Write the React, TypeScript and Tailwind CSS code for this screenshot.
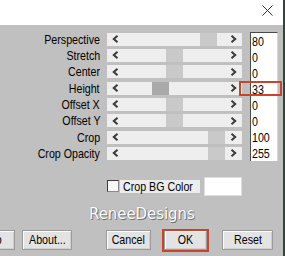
import React from "react";

const rows = [
  { label: "Perspective", value: "80", thumb: 93 },
  { label: "Stretch", value: "0", thumb: 59 },
  { label: "Center", value: "0", thumb: 59 },
  { label: "Height", value: "33", thumb: 45, dark: true },
  { label: "Offset X", value: "0", thumb: 59 },
  { label: "Offset Y", value: "0", thumb: 59 },
  { label: "Crop", value: "100", thumb: 101 },
  { label: "Crop Opacity", value: "255", thumb: 101 },
];

function NarrowR({ children }: { children: React.ReactNode }) {
  return <span className="inline-block whitespace-nowrap scale-x-[0.82] origin-right">{children}</span>;
}
function NarrowL({ children }: { children: React.ReactNode }) {
  return <span className="inline-block whitespace-nowrap scale-x-[0.82] origin-left">{children}</span>;
}
function NarrowC({ children }: { children: React.ReactNode }) {
  return <span className="inline-block whitespace-nowrap scale-x-[0.82] origin-center">{children}</span>;
}

function Chevron({ dir }: { dir: "l" | "r" }) {
  return (
    <svg width="7" height="8" viewBox="0 0 7 8" className="block">
      {dir === "l" ? (
        <path d="M5.5 0.8 L1.8 4 L5.5 7.2" fill="none" stroke="#3a3a3a" strokeWidth="2" />
      ) : (
        <path d="M1.5 0.8 L5.2 4 L1.5 7.2" fill="none" stroke="#3a3a3a" strokeWidth="2" />
      )}
    </svg>
  );
}

function Btn({ children, className }: { children: React.ReactNode; className: string }) {
  return (
    <div
      className={
        "h-[20px] flex items-center bg-[#e3e3e3] border border-[#9c9c9c] shadow-[inset_1px_1px_0_#fbfbfb,inset_-1px_-1px_0_#cfcfcf] " +
        className
      }
    >
      <NarrowC>{children}</NarrowC>
    </div>
  );
}

export default function App() {
  return (
    <div className="w-[285px] h-[256px] overflow-hidden flex flex-col bg-[#c0c0c0] border-r-2 border-[#34443c] font-['Liberation_Sans',Arial,sans-serif] text-[13px] leading-[15px] text-black">
      <div className="h-[25px] shrink-0 bg-white flex justify-end items-start pt-[5px] pr-[10px]">
        <svg width="11" height="11" viewBox="0 0 11 11">
          <path d="M0.5 0.5 L10.5 10.5 M10.5 0.5 L0.5 10.5" stroke="#333" strokeWidth="1" />
        </svg>
      </div>

      <div className="relative pt-[6px] flex flex-col">
        <div className="flex">
          <div className="w-[100px] flex flex-col">
            {rows.map((r) => (
              <div key={r.label} className="h-[16.33px] flex items-center justify-end">
                <NarrowR>{r.label}</NarrowR>
              </div>
            ))}
          </div>
          <div className="ml-[7px] w-[135px] flex flex-col">
            {rows.map((r) => (
              <div key={r.label} className="h-[16.33px] flex items-center">
                <div className="relative w-full h-[13px] bg-[#eeeeee] flex items-center justify-between px-[5px]">
                  <div
                    className={"absolute top-0 h-[13px] w-[17px] " + (r.dark ? "bg-[#a9a9a9]" : "bg-[#c9c9c9]")}
                    style={{ left: r.thumb }}
                  />
                  <Chevron dir="l" />
                  <Chevron dir="r" />
                </div>
              </div>
            ))}
          </div>
          <div className="ml-[8px] mt-[1px] w-[28px] h-[129px] bg-white border-l border-t border-[#4a4a4a] border-r border-r-[#d8d8d8] flex flex-col">
            {rows.map((r) => (
              <div key={r.label} className="h-[16.1px] flex items-center pl-[1px]">
                <NarrowL>{r.value}</NarrowL>
              </div>
            ))}
          </div>
        </div>

        <div className="absolute left-[239px] top-[56px] w-[43px] h-[15px] border-2 border-[#c9432d]" />

        <div className="mt-[15px] h-[19px] flex items-center pl-[107px]">
          <div className="w-[12px] h-[12px] bg-[#f7f7f7] border border-[#3c3c3c] border-r-[#8a8a8a] border-b-[#8a8a8a]" />
          <div className="ml-[1px] w-[80px] h-[13px] bg-[#ececec] flex items-center pl-[3px]">
            <NarrowL>Crop BG Color</NarrowL>
          </div>
          <div className="ml-[4px] w-[38px] h-[19px] bg-white border border-[#dedede]" />
        </div>

        <div className="mt-[8px] h-[19px] text-center font-['DejaVu_Sans',sans-serif] text-[16px] leading-[19px] text-white [text-shadow:1px_1px_0_#707070,0_0_1px_#808080]">
          <span className="inline-block scale-x-[0.93]">ReneeDesigns</span>
        </div>

        <div className="relative mt-[7px] h-[20px] flex">
          <Btn className="-ml-[35px] w-[50px] justify-end pr-[10px]">Info</Btn>
          <Btn className="ml-[7px] w-[50px] justify-center">About...</Btn>
          <Btn className="ml-[34px] w-[45px] justify-center">Cancel</Btn>
          <Btn className="ml-[13px] w-[43px] justify-center">OK</Btn>
          <Btn className="ml-[15px] w-[51px] justify-center">Reset</Btn>
          <div className="absolute left-[162px] top-[-1px] w-[47px] h-[23px] border-2 border-[#c9432d]" />
        </div>
      </div>
    </div>
  );
}
